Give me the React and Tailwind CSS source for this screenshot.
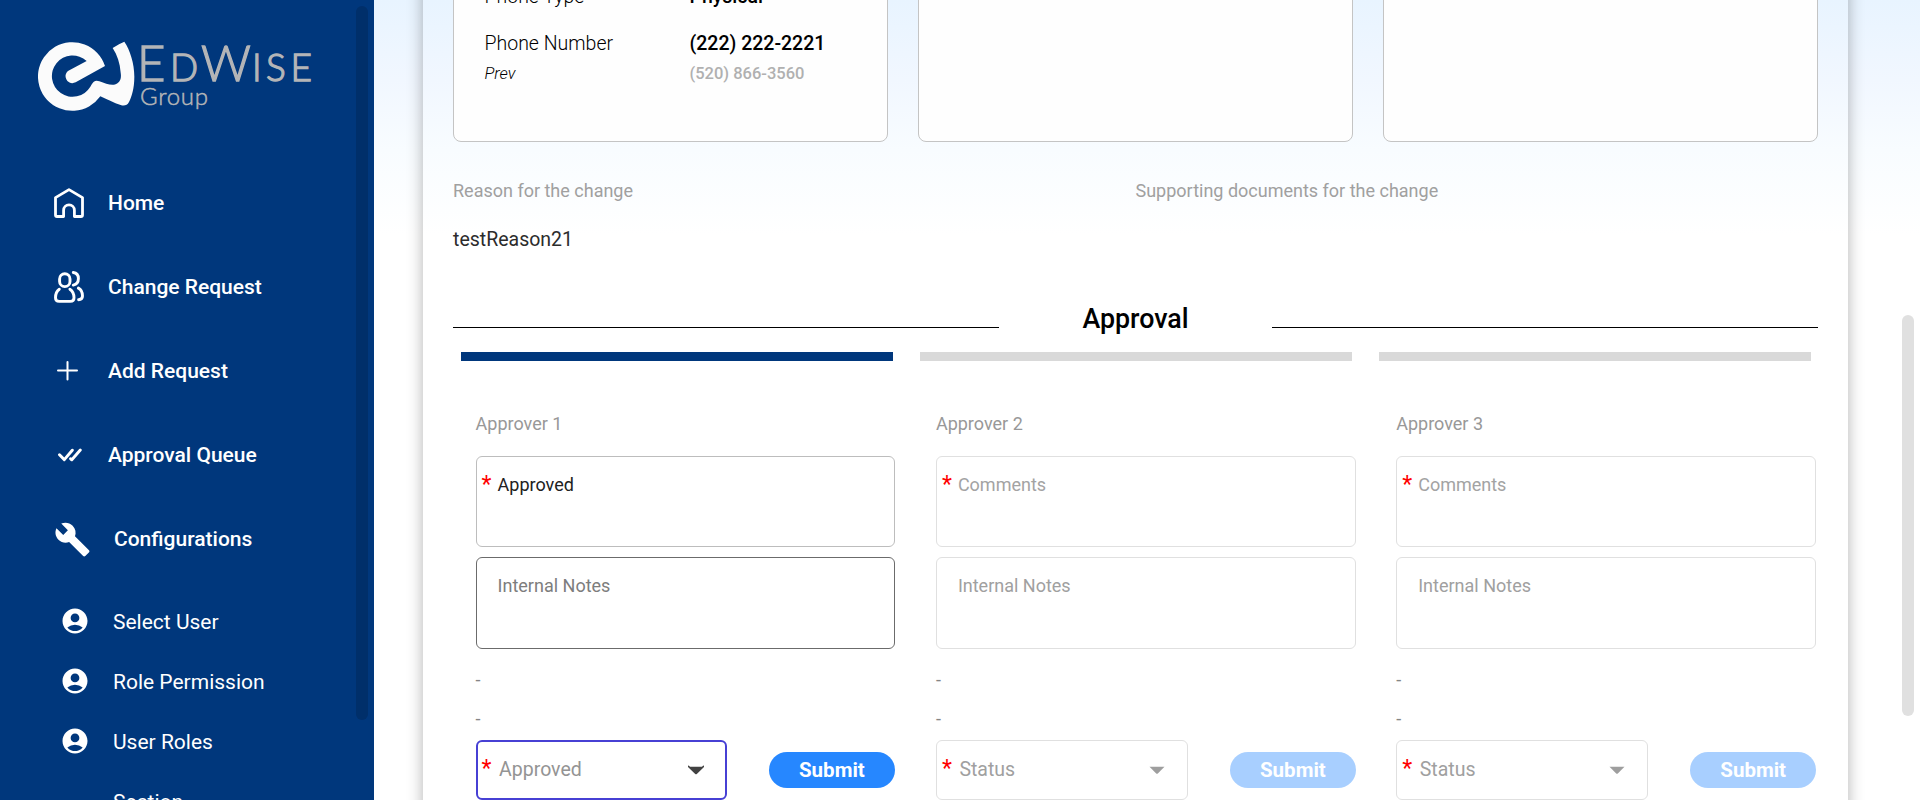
import React from "react";
import { MdBuild, MdAccountCircle } from "react-icons/md";

function Logo() {
  return (
    <svg className="block" width="300" height="90" viewBox="0 0 300 90">
      <path
        transform="translate(-8 -2) scale(0.33333)"
        fill="#fbfbfb"
        d="M225 108 L137 157 C118 166 104 148 107 134 C109 128 112 124 118 121 L170 93 A62 62 0 1 0 181 170 C190 152 198 150 208 154 C225 160 240 166 252 164 C270 160 275 146 272 128 C270 100 262 75 248 54 Q265 42 283 35 C300 60 313 100 313 140 C313 175 305 200 297 216 C292 226 284 228 274 226 C250 218 230 208 211 199 A103 103 0 1 1 225 108 Z"
      />
      <g fill="#b4b5b7" stroke="#b4b5b7" fontFamily="Lato, sans-serif" fontWeight="300">
        <text fontSize="49" y="49" x="99 163" strokeWidth="1.3">EW</text>
        <text fontSize="37" y="49" x="132 214 228 252.500" strokeWidth="1.3">DISE</text>
        <text fontSize="24" y="73" x="102" textLength="68" strokeWidth="0.500">Group</text>
      </g>
    </svg>
  );
}

function HomeIcon() {
  return (
    <svg width="30" height="30" viewBox="0 0 30 30" fill="none" stroke="white" strokeWidth="2.8" strokeLinejoin="round">
      <path d="M1.5 9.6 15 1.6l13.500 8v17.400q0 1.500-1.500 1.500h-6.600v-6.200a5.400 5.400 0 0 0-10.800 0v6.200H3q-1.500 0-1.500-1.500z" />
    </svg>
  );
}

function UsersIcon() {
  return (
    <svg width="30" height="32" viewBox="0 0 30 32" fill="none" stroke="white" strokeWidth="2.900" strokeLinecap="round">
      <rect x="5.600" y="2.800" width="10.400" height="12.800" rx="5.200" />
      <path d="M5.300 18.200c-2.600 1.800-3.800 4.800-3.800 8.500q0 3.700 3.700 3.700h11.100q3.700 0 3.700-3.700c0-3.700-1.500-6.700-4.100-8.500" />
      <path d="M19.300 1.500c3.200.4 5.100 2.900 5.100 6.100s-1.900 5.900-5.100 6.500M24.400 17.100c2.900 1.500 4.100 4.400 4.100 8 0 2.400-1.300 3.600-3.900 3.600" />
    </svg>
  );
}

function PlusIcon() {
  return (
    <svg width="21" height="20" viewBox="0 0 21 20" stroke="white" strokeWidth="2" strokeLinecap="round">
      <path d="M1 9.500h19M10.500 1v17.500" />
    </svg>
  );
}

function ChecksIcon() {
  return (
    <svg width="24" height="14" viewBox="0 0 24 14" fill="none" stroke="white" strokeWidth="2.900" strokeLinecap="round" strokeLinejoin="round">
      <path d="M1.500 6.800 6.300 11.600 14.300 2.200M12.600 10.800l1.200 1 8.500-9.800" />
    </svg>
  );
}

function NavItem({ icon, children, pad = "pl-[54px]" }) {
  return (
    <a className={"flex h-[84px] items-center text-[21px] font-medium text-white " + pad}>
      <span className="flex w-[54px] shrink-0 items-center">{icon}</span>
      <span className="pt-px">{children}</span>
    </a>
  );
}

function SubItem({ children }) {
  return (
    <a className="flex h-[60px] items-center pl-[59.500px] text-[21px] text-white">
      <span className="w-[53.500px] shrink-0 pb-1">
        <MdAccountCircle size={30} />
      </span>
      <span>{children}</span>
    </a>
  );
}

function Sidebar() {
  return (
    <aside className="flex h-[800px] w-[374px] shrink-0 overflow-hidden bg-[#00377c]">
      <div className="w-[356px] shrink-0">
        <div className="pt-8 pl-[38px]">
          <Logo />
        </div>
        <nav className="pt-[39px]">
          <NavItem icon={<HomeIcon />}>Home</NavItem>
          <NavItem icon={<UsersIcon />}>Change Request</NavItem>
          <NavItem icon={<span className="pl-[3px]"><PlusIcon /></span>}>Add Request</NavItem>
          <NavItem icon={<span className="pl-[3.500px]"><ChecksIcon /></span>}>Approval Queue</NavItem>
          <NavItem pad="pl-[60px]" icon={<MdBuild size={37} className="-ml-[6.500px]" />}>Configurations</NavItem>
          <div className="pt-3">
            <SubItem>Select User</SubItem>
            <SubItem>Role Permission</SubItem>
            <SubItem>User Roles</SubItem>
            <div className="flex h-[60px] items-center pl-[113px] text-[21px] text-white">Section</div>
          </div>
        </nav>
      </div>
      <div className="mt-1.5 h-[714px] w-3 rounded-full bg-[#002f6a]" />
    </aside>
  );
}

const cardStyle = "h-[182px] rounded-lg border border-[#c4c4c4] bg-[#fefefe]";

function Star() {
  return <span className="w-4 shrink-0 text-[23px] leading-6 text-[#ff0000]">*</span>;
}

function TextArea({ required, text, border, color, height }) {
  return (
    <div className={"flex rounded-md border pl-[5px] " + height + " " + border}>
      <div className="flex pt-4">
        <span className="w-4">{required && <Star />}</span>
        <span className={"text-[18px] leading-6 " + color}>{text}</span>
      </div>
    </div>
  );
}

function Approver({ n, active }) {
  const soft = "border-[#e0e0e0]";
  return (
    <div className={active ? "w-[419.300px]" : "w-[420px]"}>
      <div className="h-6 text-[18px] leading-6 text-[#989898]">Approver {n}</div>
      <div className="flex flex-col gap-2.5 pt-5">
        <TextArea
          required
          height="h-[91px]"
          text={active ? "Approved" : "Comments"}
          border={active ? "border-[#bdbdbd]" : soft}
          color={active ? "text-[#212121]" : "text-[#a3a3a3]"}
        />
        <TextArea
          height="h-[92px]"
          text="Internal Notes"
          border={active ? "border-[#6b6b6b]" : soft}
          color={active ? "text-[#7d7d7d]" : "text-[#a0a0a0]"}
        />
      </div>
      <div className="flex h-[91px] flex-col gap-[15px] pt-[19px] text-[18px] leading-6 text-[#858585]">
        <span>-</span>
        <span>-</span>
      </div>
      <div className="flex items-center justify-between">
        <div
          className={
            active
              ? "flex h-[60px] w-[251.600px] items-center rounded-md border-2 border-[#4740d4] pr-[21px] pl-1"
              : "flex h-[60px] w-[252px] items-center rounded-md border border-[#e0e0e0] pr-[22px] pl-[5px]"
          }
        >
          <span className="flex w-4 pb-[3px]"><Star /></span>
          <span className={"flex-1 pl-[1.500px] text-[19.500px] " + (active ? "text-[#949494]" : "text-[#a0a0a0]")}>
            {active ? "Approved" : "Status"}
          </span>
          <svg width="16" height="10" viewBox="0 0 16 10">
            {active ? (
              <path d="M0 0.500 Q1 .5 2 1.700 H14 Q15 .5 16 .5 V2 L8.800 9 Q8 9.700 7.200 9 L0 2z" fill="#424242" />
            ) : (
              <path d="M.5 1.700h15L8.800 8.500q-.8.700-1.600 0z" fill="#9e9e9e" />
            )}
          </svg>
        </div>
        <button
          className={
            "h-9 w-[126px] rounded-full text-[20.500px] font-bold text-white " + (active ? "bg-[#2687ff]" : "bg-[#a8cfff]")
          }
        >
          Submit
        </button>
      </div>
    </div>
  );
}

export default function App() {
  return (
    <div className="flex h-[800px] w-[1920px] overflow-hidden bg-white font-['Roboto',sans-serif]">
      <Sidebar />
      <main className="flex h-[800px] flex-1 overflow-hidden bg-[linear-gradient(180deg,#e8f4ff_0px,#f1f7ff_80px,#f8fcff_150px,#ffffff_235px)]">
        <section className="-mt-10 ml-[49px] h-[900px] w-[1425px] shrink-0 px-[30px] shadow-[0_0_15px_rgba(0,0,0,0.3)]">
          <div className="grid grid-cols-3 gap-[30px]">
            <div className={cardStyle + " grid grid-cols-[205px_1fr] content-start pl-[30.500px]"}>
              <span className="pt-[24px] pb-[23px] text-[19.500px] leading-6 font-light">Phone Type</span>
              <span className="pt-[24px] pb-[23px] text-[19.500px] leading-6 font-medium">Physical</span>
              <span className="text-[19.500px] leading-6 font-light">Phone Number</span>
              <span className="text-[19.500px] leading-6 font-medium">(222) 222-2221</span>
              <span className="pt-1.5 text-[16.500px] leading-6 font-light italic">Prev</span>
              <span className="pt-1.5 text-[16.500px] leading-6 font-medium text-[#b0b0b0]">(520) 866-3560</span>
            </div>
            <div className={cardStyle} />
            <div className={cardStyle} />
          </div>

          <div className="grid grid-cols-2 pt-[37px]">
            <div>
              <div className="text-[18px] leading-6 text-[#a0a0a0]">Reason for the change</div>
              <div className="pt-[25px] text-[19.500px] leading-6 text-[#2c2c2c]">testReason21</div>
            </div>
            <div className="text-[18px] leading-6 text-[#a0a0a0]">Supporting documents for the change</div>
          </div>

          <div className="flex items-end pt-[51px]">
            <div className="mb-[7px] h-px flex-1 bg-black" />
            <h2 className="w-[273px] text-center text-[26.800px] leading-8 font-medium text-black">Approval</h2>
            <div className="mb-[7px] h-px flex-1 bg-black" />
          </div>

          <div className="grid grid-cols-3 gap-[27px] pt-[17px] pr-[7px] pl-2">
            <div className="h-[9px] bg-[#00377c]" />
            <div className="h-[9px] bg-[#d9d9d9]" />
            <div className="h-[9px] bg-[#d9d9d9]" />
          </div>

          <div className="grid grid-cols-[460.300px_460.300px_420px] pt-[51px] pl-[22.600px]">
            <Approver n={1} active />
            <Approver n={2} />
            <Approver n={3} />
          </div>
        </section>
        <div className="mt-[315px] ml-[54px] h-[401px] w-3 rounded-full bg-[#e0e0e0]" />
      </main>
    </div>
  );
}
